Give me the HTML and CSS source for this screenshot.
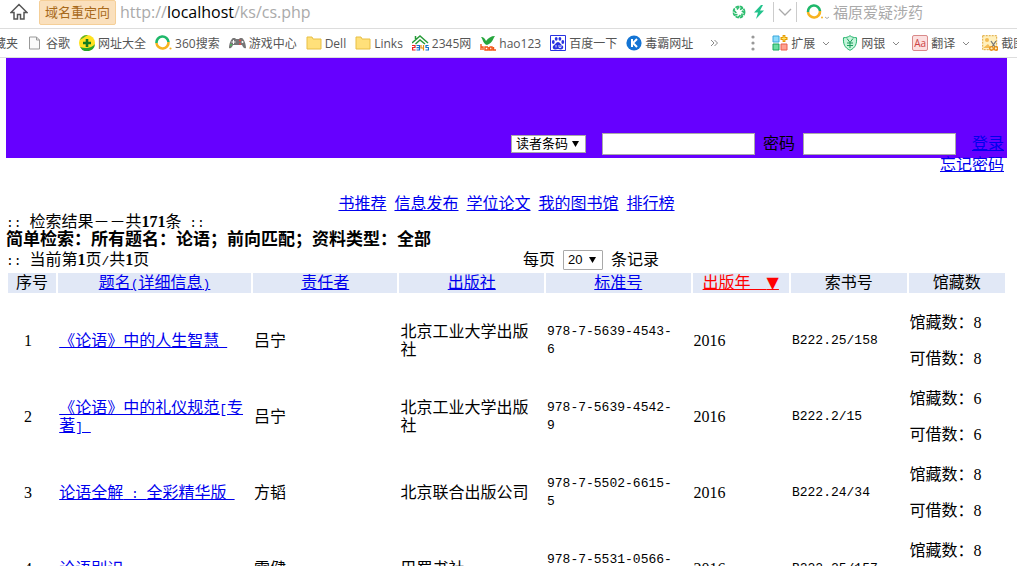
FILE: index.html
```html
<!DOCTYPE html>
<html lang="zh-CN">
<head>
<meta charset="utf-8">
<title>检索结果</title>
<link rel="stylesheet" href="styles.css">
</head>
<body>
<div class="browser">
  <div class="address-bar">
    <button class="icon-button home" type="button" aria-label="主页">
      <svg width="18" height="18" viewBox="0 0 18 18"><path d="M1 9.500L9 1.500l8 8h-3V16h-3.500v-4.500h-3V16H4V9.500z" fill="none" stroke="#555" stroke-width="1.500"/></svg>
    </button>
    <span class="tag">域名重定向</span>
    <div class="url">http://<b>localhost</b>/ks/cs.php</div>
    <div class="tools">
      <svg width="14" height="14" viewBox="0 0 14 14"><g fill="none" stroke="#2dbd6e" stroke-width="1.700"><circle cx="7" cy="7" r="5.600" stroke-dasharray="3.400 1"/><path d="M7 1.500L5 4.500M11 3L8 4.500M12.500 7.500L9.800 6M10 11.500V8.500M6 12.500L8.500 10M2.500 10L5.500 9.500M2 5.500l2.300 2.500"/></g></svg>
      <svg width="12" height="16" viewBox="0 0 12 16"><path d="M8 1L1 8.500h4L3 15 11 6.500H7L10 1z" fill="#22c38c"/></svg>
      <button class="icon-button divided" type="button" aria-label="展开"><svg width="14" height="8" viewBox="0 0 14 8"><path d="M1 1l6 6 6-6" fill="none" stroke="#aaa" stroke-width="1.300"/></svg></button>
    </div>
    <div class="search">
      <svg width="24" height="18" viewBox="0 0 24 18"><path d="M2 9a6 6 0 0 1 12-1" fill="none" stroke="#1fb86a" stroke-width="2.600"/><path d="M2 9a6 6 0 0 0 12-1" fill="none" stroke="#f7b320" stroke-width="2.600"/><circle cx="16" cy="14.500" r="1" fill="#f7b320"/><path d="M19 14l2 1.500 2-1.500" fill="none" stroke="#aaa"/></svg>
      <input type="text" aria-label="搜索" placeholder="福原爱疑涉药">
    </div>
  </div>

  <div class="bookmarks">
    <a class="cut" href="#">藏夹</a>
    <a href="#"><svg width="16" height="16" viewBox="0 0 16 16"><path d="M2.500 2h7l3 3v9h-10zM9.500 2v3h3" fill="#fafafa" stroke="#999"/></svg>谷歌</a>
    <a href="#"><svg width="16" height="16" viewBox="0 0 16 16"><circle cx="8" cy="8" r="8" fill="#ffe21f"/><path d="M1 12a8 8 0 0 0 15-3c-3 4-9 5-15 3z" fill="#2aa52d"/><path d="M1 5a8 8 0 0 1 8-5C5 2 3 4 1 5z" fill="#57b52c"/><path d="M8 4v8M4 8h8" stroke="#147d20" stroke-width="2.600"/></svg>网址大全</a>
    <a href="#"><svg width="17" height="16" viewBox="0 0 17 16"><path d="M1.500 8a6 6 0 0 1 12-1" fill="none" stroke="#1fb86a" stroke-width="2.600"/><path d="M1.500 8a6 6 0 0 0 12-1" fill="none" stroke="#f7b320" stroke-width="2.600"/><circle cx="15.500" cy="13.500" r="1.100" fill="#f7b320"/></svg>360搜索</a>
    <a href="#"><svg width="17" height="16" viewBox="0 0 17 16"><path d="M4 3h2l1 1h3l1-1h2c2 1 4 6 4 10-2 1-3-1-4-3H4c-1 2-2 4-4 3C0 9 2 4 4 3z" fill="#777"/><path d="M2.500 7h4M4.500 5v4" stroke="#fff"/><circle cx="11" cy="5.500" r="1" fill="#e44"/><circle cx="13.500" cy="7" r="1" fill="#fff"/><circle cx="11" cy="9" r="1" fill="#e44"/><circle cx="2" cy="10" r="1" fill="#4b5"/></svg>游戏中心</a>
    <a href="#"><svg width="16" height="16" viewBox="0 0 16 16"><path d="M1 2h5l1 2h8v10H1z" fill="#ffe07a" stroke="#e8bf45"/></svg>Dell</a>
    <a href="#"><svg width="16" height="16" viewBox="0 0 16 16"><path d="M1 2h5l1 2h8v10H1z" fill="#ffe07a" stroke="#e8bf45"/></svg>Links</a>
    <a href="#"><svg width="17" height="16" viewBox="0 0 17 16"><path d="M0 8l8-7 8 7M3.500 1v3M3.500 9L8 5l5 4" fill="none" stroke="#279b38" stroke-width="1.500"/><g fill="none" stroke-width="1.200"><path d="M0 10.500h3v2H.6V15h3" stroke="#e22"/><path d="M4.500 10.500h3V15h-3M4.500 12.700h3" stroke="#1574d0"/><path d="M9 10v3h3M11.500 10v5.500" stroke="#e78c10"/><path d="M16.500 10.500H14v2h2.500V15H13.500" stroke="#1574d0"/></g></svg>2345网</a>
    <a href="#"><svg width="16" height="16" viewBox="0 0 16 16"><path d="M1 2c3 0 4 2 5 4 2-3 5-5 9-5-2 2-2 7-8 9C3 9 3 4 1 2z" fill="#26a63d"/><path d="M1 9v6M1 12h2v3M8 12H5v3h3v-3M9.500 12v3H12v-3H9.500M13.500 12v3H16" fill="none" stroke="#f25516" stroke-width="1.400"/></svg>hao123</a>
    <a href="#"><svg width="16" height="16" viewBox="0 0 16 16"><path d="M.5.500h15v15H.5z" fill="#fff" stroke="#2932e1"/><g fill="#2932e1"><ellipse cx="3.300" cy="7" rx="1.400" ry="1.900"/><ellipse cx="6.200" cy="3.800" rx="1.400" ry="1.900"/><ellipse cx="9.900" cy="3.800" rx="1.400" ry="1.900"/><ellipse cx="12.800" cy="7" rx="1.400" ry="1.900"/><path d="M8 7c2 0 3 3 5 4 1 3-1 4-5 3-4 1-6 0-5-3 2-1 3-4 5-4z"/></g><path d="M6 10v2.500M9 10v2.500h2V10" fill="none" stroke="#fff" stroke-width=".8"/></svg>百度一下</a>
    <a href="#"><svg width="16" height="16" viewBox="0 0 16 16"><circle cx="8" cy="8" r="7.600" fill="#1474d4"/><path d="M6 4v8M11 4L7 8l4 4" fill="none" stroke="#fff" stroke-width="2"/></svg>毒霸网址</a>
    <button class="icon-button more" type="button" aria-label="更多"><svg width="8" height="8" viewBox="0 0 8 8"><path d="M1 1l3 3-3 3M4.500 1l3 3-3 3" fill="none" stroke="#888"/></svg></button>
    <svg class="grip" width="4" height="16" viewBox="0 0 4 16"><g fill="#999"><circle cx="2" cy="2" r="1.600"/><circle cx="2" cy="8" r="1.600"/><circle cx="2" cy="14" r="1.600"/></g></svg>
    <button class="extension" type="button"><svg width="16" height="16" viewBox="0 0 16 16"><path d="M1 1h6v6H1z" fill="#8bdcfb" stroke="#39a6dc"/><path d="M1 9h6v6H1z" fill="#69dda0" stroke="#18a55b"/><path d="M9 9h6v6H9z" fill="#ffa28f" stroke="#e8604e"/><path d="M12 0v7M8.500 3.500h7" stroke="#e69c00" stroke-width="2.800"/><path d="M12 1.200v4.600M9.700 3.500h4.600" stroke="#ffe36b"/></svg>扩展<svg class="caret" width="8" height="5" viewBox="0 0 8 5"><path d="M1 1l3 3 3-3" fill="none" stroke="#888"/></svg></button>
    <button class="extension" type="button"><svg width="16" height="16" viewBox="0 0 16 16"><path d="M8 .7c2 1.500 4 2 6.500 2 .5 6-1 10-6.500 12.600C2.500 12.700 1 8.700 1.500 2.700 4 2.700 6 2.200 8 .7z" fill="#c5f5db" stroke="#24b46d"/><path d="M5 3.500l3 4 3-4M8 7.500V13M5 8h6M5 10.500h6" fill="none" stroke="#1a9c5b"/></svg>网银<svg class="caret" width="8" height="5" viewBox="0 0 8 5"><path d="M1 1l3 3 3-3" fill="none" stroke="#888"/></svg></button>
    <button class="extension" type="button"><span class="aa">Aa</span>翻译<svg class="caret" width="8" height="5" viewBox="0 0 8 5"><path d="M1 1l3 3 3-3" fill="none" stroke="#888"/></svg></button>
    <button class="extension" type="button"><svg width="16" height="16" viewBox="0 0 16 16"><path d="M.7.700h14v14h-14z" fill="#fff0bd" stroke="#dfa637" stroke-dasharray="2 1"/><circle cx="5" cy="5" r="2" fill="#f4bc54"/><path d="M1 13l5-4 3 4z" fill="#f4bc54"/><path d="M9 6l4 6M14 6l-4 6" stroke="#777" stroke-width="1.300"/><circle cx="9.500" cy="13.500" r="1.800" fill="none" stroke="#e58b16" stroke-width="1.300"/><circle cx="14" cy="13.500" r="1.800" fill="none" stroke="#e58b16" stroke-width="1.300"/></svg>截图</button>
  </div>

  <main class="page">
    <header class="banner">
      <form class="login">
        <select class="login-type" aria-label="登录方式"><option>读者条码</option></select>
        <input class="field" type="text" aria-label="读者条码">
        <label for="password">密码</label>
        <input class="field" id="password" type="password">
        <a class="sign-in" href="#">登录</a>
      </form>
      <a class="forgot" href="#">忘记密码</a>
    </header>

    <nav class="menu">
      <a href="#">书推荐</a>
      <a href="#">信息发布</a>
      <a href="#">学位论文</a>
      <a href="#">我的图书馆</a>
      <a href="#">排行榜</a>
    </nav>

    <div class="summary"><span class="code">:: </span>检索结果－－共<b>171</b>条<span class="code"> ::</span></div>
    <div class="summary query"><b>简单检索：所有题名：论语；前向匹配；资料类型：全部</b></div>
    <div class="paging">
      <div><span class="code">:: </span>当前第<b>1</b>页<span class="code">/</span>共<b>1</b>页</div>
      <div class="page-size"><label for="size">每页</label><select id="size"><option>20</option></select>条记录</div>
    </div>

    <table class="results">
      <colgroup><col class="c-no"><col class="c-title"><col class="c-wide"><col class="c-wide"><col class="c-wide"><col class="c-year"><col class="c-call"><col class="c-year"></colgroup>
      <thead>
        <tr><th>序号</th><th><a href="#">题名<span class="code">(</span>详细信息<span class="code">)</span></a></th><th><a href="#">责任者</a></th><th><a href="#">出版社</a></th><th><a href="#">标准号</a></th><th><a class="sorted" href="#">出版年&nbsp;&nbsp;&nbsp;&nbsp;<span class="arrow">▼</span></a></th><th>索书号</th><th>馆藏数</th></tr>
      </thead>
      <tbody>
        <tr><td class="no">1</td><td><a href="#">《论语》中的人生智慧&nbsp;&nbsp;</a></td><td>吕宁</td><td>北京工业大学出版社</td><td class="code isbn">978-7-5639-4543-6</td><td>2016</td><td class="code">B222.25/158</td><td><div class="stock"><span>馆藏数：8</span><span>可借数：8</span></div></td></tr>
        <tr><td class="no">2</td><td><a href="#">《论语》中的礼仪规范<span class="code">[</span>专著<span class="code">]&nbsp;</span></a></td><td>吕宁</td><td>北京工业大学出版社</td><td class="code isbn">978-7-5639-4542-9</td><td>2016</td><td class="code">B222.2/15</td><td><div class="stock"><span>馆藏数：6</span><span>可借数：6</span></div></td></tr>
        <tr><td class="no">3</td><td><a href="#">论语全解<span class="code"> : </span>全彩精华版&nbsp;&nbsp;</a></td><td>方韬</td><td>北京联合出版公司</td><td class="code isbn">978-7-5502-6615-5</td><td>2016</td><td class="code">B222.24/34</td><td><div class="stock"><span>馆藏数：8</span><span>可借数：8</span></div></td></tr>
        <tr><td class="no">4</td><td><a href="#">论语别识</a></td><td>雷健</td><td>巴蜀书社</td><td class="code isbn">978-7-5531-0566-6</td><td>2016</td><td class="code">B222.25/157</td><td><div class="stock"><span>馆藏数：8</span><span>可借数：8</span></div></td></tr>
      </tbody>
    </table>
  </main>
</div>
</body>
</html>
```
FILE: styles.css
```css
* { box-sizing: border-box; }

body {
  margin: 0;
  background: #fff;
  color: #000;
}

.browser {
  display: flex;
  flex-direction: column;
  height: 100vh;
  overflow: hidden;
  font-family: "Open Sans", "Noto Sans CJK SC", sans-serif;
}

button {
  border: 0;
  padding: 0;
  background: none;
  font: inherit;
  color: inherit;
}

svg { flex: none; }

/* Address bar */
.address-bar {
  display: flex;
  flex: none;
  align-items: center;
  height: 29px;
  padding-bottom: 4px;
  border-bottom: 1px solid #ddd;
}

.icon-button {
  display: flex;
  align-items: center;
}

.home { margin: 0 11px 0 10px; }

.tag {
  height: 25px;
  padding: 0 5px;
  border: 1px solid #f5cf98;
  border-radius: 2px;
  background: #fae0bd;
  color: #a8691a;
  font-size: 13px;
  line-height: 23px;
}

.url {
  flex: 1;
  margin-left: 4px;
  color: #aaa;
  font-size: 16px;
  line-height: 24px;
}

.url b {
  color: #000;
  font-weight: normal;
}

.tools {
  display: flex;
  align-items: center;
  gap: 7px;
}

.divided {
  height: 20px;
  margin-left: 1px;
  padding: 0 4px;
  border: solid #ccc;
  border-width: 0 1px;
}

.search {
  display: flex;
  align-items: center;
  width: 220px;
  padding-left: 9px;
}

.search input {
  width: 170px;
  border: 0;
  padding: 0 3px;
  background: none;
  font: 15px/24px "Noto Sans CJK SC", sans-serif;
}

.search input::placeholder { color: #aaa; }

/* Bookmarks */
.bookmarks {
  display: flex;
  flex: none;
  align-items: center;
  gap: 9px;
  height: 29px;
  overflow: hidden;
  border-bottom: 1px solid #ddd;
  color: #555;
  font-size: 12px;
  white-space: nowrap;
}

.bookmarks a,
.extension {
  display: flex;
  flex: none;
  align-items: center;
  gap: 3px;
  color: inherit;
  text-decoration: none;
}

.bookmarks .cut { margin-left: -6px; }

.more { margin: 0 24px 0 8px; }

.grip { margin-right: 8px; }

.extension .caret { margin: 0 3px 0 4px; }

.aa {
  width: 16px;
  border: 1px solid #d98a8a;
  border-radius: 2px;
  background: #fce0e0;
  color: #c44;
  font-size: 10px;
  line-height: 14px;
  text-align: center;
}

/* Library page */
.page {
  flex: 1;
  min-height: 0;
  padding: 0 10px 0 6px;
  overflow: hidden;
  font: 16px/18px "Liberation Serif", "Noto Sans CJK SC", serif;
}

.page a { color: #00e; }

.code {
  font-family: "Liberation Mono", "Noto Sans CJK SC", monospace;
  font-size: 13px;
}

span.code { line-height: 1; }

.banner {
  height: 100px;
  padding: 74px 3px 0 0;
  background: #60f;
  text-align: right;
}

.login {
  display: flex;
  justify-content: flex-end;
  align-items: center;
  gap: 8px;
  height: 24px;
}

.login-type {
  width: 75px;
  height: 18px;
  margin-right: 8px;
}

.page select {
  border: 1px solid #a9a9a9;
  appearance: none;
  background: #fff url("data:image/svg+xml,%3Csvg xmlns='http://www.w3.org/2000/svg' width='8' height='6'%3E%3Cpath d='M0 0h7L3.500 6z'/%3E%3C/svg%3E") no-repeat right 5px center;
  padding: 0 17px 0 4px;
  color: #000;
  font: 13px/16px "Liberation Sans", "Noto Sans CJK SC", sans-serif;
}

.field {
  width: 153px;
  height: 22px;
  border: 1px solid #a9a9a9;
  padding: 1px;
  background: #fff;
}

.sign-in { margin-left: 8px; }

.menu {
  display: flex;
  justify-content: center;
  gap: 8px;
  margin-top: 37px;
}

.summary { height: 18px; }

.query { font-size: 17px; }

.paging {
  display: grid;
  grid-template-columns: 517px 1fr;
  align-items: center;
  height: 22px;
}

.page-size {
  display: flex;
  align-items: center;
  gap: 8px;
}

.page #size {
  width: 40px;
  height: 20px;
  border-radius: 1px;
}

.results {
  width: 100%;
  table-layout: fixed;
  border-spacing: 2px;
}

.c-no { width: 5%; }
.c-title { width: 20%; }
.c-wide { width: 15%; }
.c-year { width: 10%; }
.c-call { width: 12%; }

.results th {
  height: 20px;
  padding: 1px;
  background: #e1e8f6;
  font-weight: normal;
  white-space: nowrap;
}

.results td { padding: 19px 1px 1px; }

.results .isbn { padding-right: 15px; }

.results .no {
  padding-right: 9px;
  text-align: center;
}

.page .sorted { color: #f00; }

.arrow {
  font-family: "DejaVu Sans", sans-serif;
  line-height: 1;
}

.stock {
  display: grid;
  gap: 18px;
}
```
